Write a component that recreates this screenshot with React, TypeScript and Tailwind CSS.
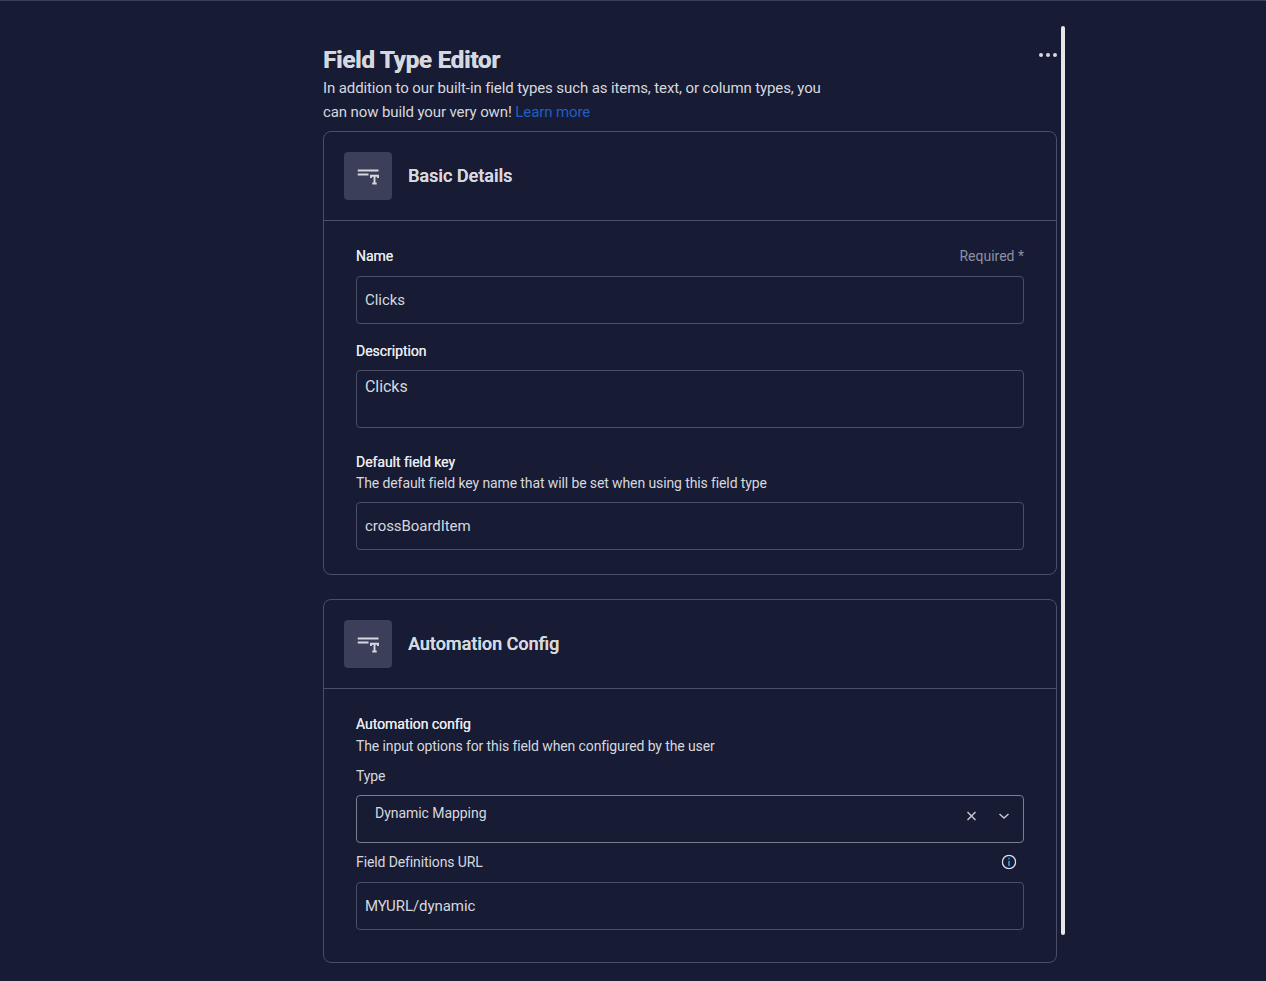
import React from "react";

const FieldIcon = () => (
  <svg width="22" height="16" viewBox="0 0 22 16" fill="none" className="block translate-y-[1px] translate-x-[0.5px]">
    <path d="M0 1.5H21" stroke="#d5d8df" strokeWidth="2" />
    <path d="M0 5.5H11" stroke="#d5d8df" strokeWidth="2" />
    <path d="M13.5 9V6.8H20.5V9M17 6.8V14.2M14.8 14.5H19.2" stroke="#d5d8df" strokeWidth="1.9" />
  </svg>
);

const Header = ({ title }: { title: string }) => (
  <div className="flex items-center gap-4 h-[89px] px-5 border-b border-[#4b4e69]">
    <div className="w-12 h-12 rounded bg-[#3c3f59] flex items-center justify-center">
      <FieldIcon />
    </div>
    <div className="text-[18px] leading-6 font-medium text-[#d5d8df] [text-shadow:0.2px_0_0_#d5d8df]">{title}</div>
  </div>
);

const Input = ({ value, className = "" }: { value: string; className?: string }) => (
  <div className={"h-12 rounded border border-[#4b4e69] px-2 flex items-center text-[15px] tracking-[-0.06px] text-[#d5d8df] " + className}>
    {value}
  </div>
);

const Label = ({ children, className = "" }: { children: React.ReactNode; className?: string }) => (
  <div className={"text-[14px] leading-5 tracking-[-0.11px] text-[#d5d8df] " + className}>{children}</div>
);

const StrongLabel = ({ children, className = "" }: { children: React.ReactNode; className?: string }) => (
  <div className={"text-[14px] leading-5 tracking-[-0.04px] text-[#e6e9ef] [text-shadow:0.08px_0_0_#e6e9ef] " + className}>{children}</div>
);

export default function App() {
  return (
    <div className="h-[981px] overflow-hidden bg-[#181b34] border-t border-[#3c3f59] font-['Roboto',sans-serif]">
      <div className="relative w-[734px] ml-[323px]">
        <div className="absolute left-[738px] top-[25px] w-1 h-[909px] bg-[#e6e6e6] rounded-sm" />
        <div className="absolute right-0 top-[52px] flex gap-[3px]">
          <span className="w-1 h-1 rounded-full bg-[#d5d8df]" />
          <span className="w-1 h-1 rounded-full bg-[#d5d8df]" />
          <span className="w-1 h-1 rounded-full bg-[#d5d8df]" />
        </div>
        <h1 className="pt-[43px] text-[24px] leading-8 font-bold text-[#d5d8df] tracking-[-0.15px] [text-shadow:0.5px_0_0_#d5d8df]">Field Type Editor</h1>
        <p className="w-[520px] text-[15px] leading-6 tracking-[-0.11px] text-[#d5d8df]">
          In addition to our built-in field types such as items, text, or column types, you can now build your very own!{" "}
          <span className="text-[#1f5fc4]">Learn more</span>
        </p>
        <section className="mt-[7px] rounded-lg border border-[#4b4e69] h-[444px]">
          <Header title="Basic Details" />
          <div className="px-8 pt-[25px]">
            <div className="flex justify-between">
              <StrongLabel>Name</StrongLabel>
              <div className="text-[14px] leading-5 text-[#8d8fa3]">Required *</div>
            </div>
            <Input value="Clicks" className="mt-[10px]" />
            <StrongLabel className="mt-[17px]">Description</StrongLabel>
            <div className="mt-[9px] h-[58px] rounded border border-[#4b4e69] px-2 pt-[6px] text-[16px] leading-5 tracking-[-0.06px] text-[#d5d8df]">Clicks</div>
            <StrongLabel className="mt-[24px]">Default field key</StrongLabel>
            <Label className="mt-[1px]">The default field key name that will be set when using this field type</Label>
            <Input value="crossBoardItem" className="mt-[9px]" />
          </div>
        </section>
        <section className="mt-6 rounded-lg border border-[#4b4e69] h-[364px]">
          <Header title="Automation Config" />
          <div className="px-8 pt-[25px]">
            <StrongLabel>Automation config</StrongLabel>
            <Label className="mt-[2px]">The input options for this field when configured by the user</Label>
            <Label className="mt-[10px]">Type</Label>
            <div className="mt-[9px] h-12 rounded border border-[#797e93] pl-[18px] pr-[13px] pb-[12px] flex items-center text-[14px] tracking-[-0.05px] text-[#d5d8df]">
              <span className="flex-1">Dynamic Mapping</span>
              <svg width="12" height="12" viewBox="0 0 12 12" className="mt-[6px] mr-[21px] translate-x-[0.5px]" fill="none">
                <path d="M2 2L10 10M10 2L2 10" stroke="#c5c7d0" strokeWidth="1.5" />
              </svg>
              <svg width="12" height="12" viewBox="0 0 12 12" className="mt-[5px]" fill="none">
                <path d="M1.5 4L6 8L10.5 4" stroke="#c5c7d0" strokeWidth="1.5" />
              </svg>
            </div>
            <div className="mt-[9px] flex items-center justify-between pr-[7px] h-5">
              <Label>Field Definitions URL</Label>
              <svg width="15" height="15" viewBox="0 0 15 15" fill="none" className="-translate-y-[0.5px] -translate-x-[0.5px]">
                <circle cx="7.5" cy="7.5" r="6.6" stroke="#d5e4f5" strokeWidth="1.3" />
                <path d="M7.5 6.2V11.5" stroke="#3a9be8" strokeWidth="1.6" />
                <path d="M7.5 3.2V4.8" stroke="#3a9be8" strokeWidth="1.6" />
              </svg>
            </div>
            <Input value="MYURL/dynamic" className="mt-[10px]" />
          </div>
        </section>
      </div>
    </div>
  );
}
